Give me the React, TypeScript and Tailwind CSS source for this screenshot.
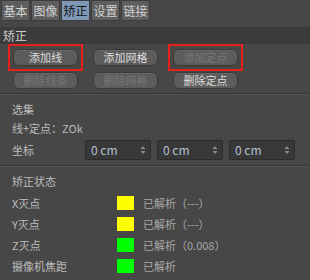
import React from "react";

const tabs = ["基本", "图像", "矫正", "设置", "链接"];

const statusRows = [
  { label: "X灭点", color: "bg-[#ffff00]", text: "已解析（---）" },
  { label: "Y灭点", color: "bg-[#ffff00]", text: "已解析（---）" },
  { label: "Z灭点", color: "bg-[#00ff00]", text: "已解析（0.008）" },
  { label: "摄像机焦距", color: "bg-[#00ff00]", text: "已解析" },
  { label: "传感器", color: "bg-[#00ff00]", text: "已解析" },
];

// Pill-shaped panel button
const PanelButton = ({ label, disabled = false }: { label: string; disabled?: boolean }) => (
  <div
    className={`w-[65px] h-[17px] rounded-[6px] flex items-center justify-center border border-[#3a3a3a] bg-[#5c5c5c] shadow-[inset_0_1px_0_rgba(255,255,255,0.08)] ${
      disabled ? "text-[#767676]" : "text-[#dcdcdc]"
    }`}
  >
    {label}
  </div>
);

// Red highlight box around a button, kept out of the layout flow by negative margin
const Marked = ({ children }: { children: React.ReactNode }) => (
  <div className="-m-[5px] p-[3px] border-2 border-[#e8201c]">{children}</div>
);

const Spinner = () => (
  <svg width="6" height="10" viewBox="0 0 6 10" className="shrink-0">
    <path d="M3 1 L5.5 4 L0.5 4 Z" fill="#8a8a8a" />
    <path d="M3 9 L5.5 6 L0.5 6 Z" fill="#8a8a8a" />
  </svg>
);

const UnitField = () => (
  <div className="w-[66px] h-[20px] bg-[#383838] border border-[#2b2b2b] rounded-[2px] flex items-center justify-between pl-[5px] pr-[4px]">
    <span className="text-[#b4c2d0] text-[12px]">0 cm</span>
    <Spinner />
  </div>
);

const Divider = () => (
  <div className="mx-[2px]">
    <div className="h-px bg-[#353535]" />
    <div className="h-px bg-[#555555]" />
  </div>
);

export default function App() {
  return (
    <div
      className="w-[310px] h-[280px] overflow-hidden bg-[#474747] text-[11px] leading-none text-[#c4c4c4]"
      style={{ fontFamily: '"Noto Sans CJK SC", "Liberation Sans", sans-serif' }}
    >
      {/* Tabs */}
      <div className="flex gap-px pl-px h-[21px]">
        {tabs.map((t) => (
          <div
            key={t}
            className={`w-[29px] h-[21px] flex items-center justify-center text-[12px] border border-[#3c3c3c] ${
              t === "矫正" ? "bg-[#7f98b8] text-[#101010]" : "bg-[#5e5e5e] text-[#d2d2d2]"
            }`}
          >
            {t}
          </div>
        ))}
      </div>

      {/* Section header */}
      <div className="mt-[6px] h-[17px] bg-[#3b3b3b] flex items-center pl-[3px] text-[12px] text-[#cfcfcf]">
        矫正
      </div>

      {/* Buttons */}
      <div className="grid grid-cols-[65px_65px_65px] gap-x-[15px] gap-y-[6px] pl-[13px] pt-[5px] pb-[4px]">
        <Marked>
          <PanelButton label="添加线" />
        </Marked>
        <PanelButton label="添加网格" />
        <Marked>
          <PanelButton label="添加定点" disabled />
        </Marked>
        <PanelButton label="删除线条" disabled />
        <PanelButton label="删除网格" disabled />
        <PanelButton label="删除定点" />
      </div>

      <Divider />

      {/* Selection */}
      <div className="pl-[12px] pt-[8px] flex flex-col gap-[7px] text-[#bdbdbd]">
        <div className="h-[12px] flex items-center">选集</div>
        <div className="h-[12px] flex items-center">线+定点：ZOk</div>
      </div>
      <div className="flex items-center h-[20px] mt-[6px] mb-[5px]">
        <div className="w-[85px] pl-[12px] text-[#bdbdbd]">坐标</div>
        <div className="flex gap-[6px]">
          <UnitField />
          <UnitField />
          <UnitField />
        </div>
      </div>

      <Divider />

      {/* Status */}
      <div className="pl-[12px] pt-[8px] text-[#bdbdbd]">
        <div className="h-[12px] flex items-center">矫正状态</div>
        <div className="flex flex-col gap-[7px] mt-[9px]">
          {statusRows.map((r) => (
            <div key={r.label} className="flex items-center h-[14px]">
              <div className="w-[105px]">{r.label}</div>
              <div className={`w-[17px] h-[14px] ${r.color}`} />
              <div className="ml-[9px] text-[#a8a8a8]">{r.text}</div>
            </div>
          ))}
        </div>
      </div>
    </div>
  );
}
